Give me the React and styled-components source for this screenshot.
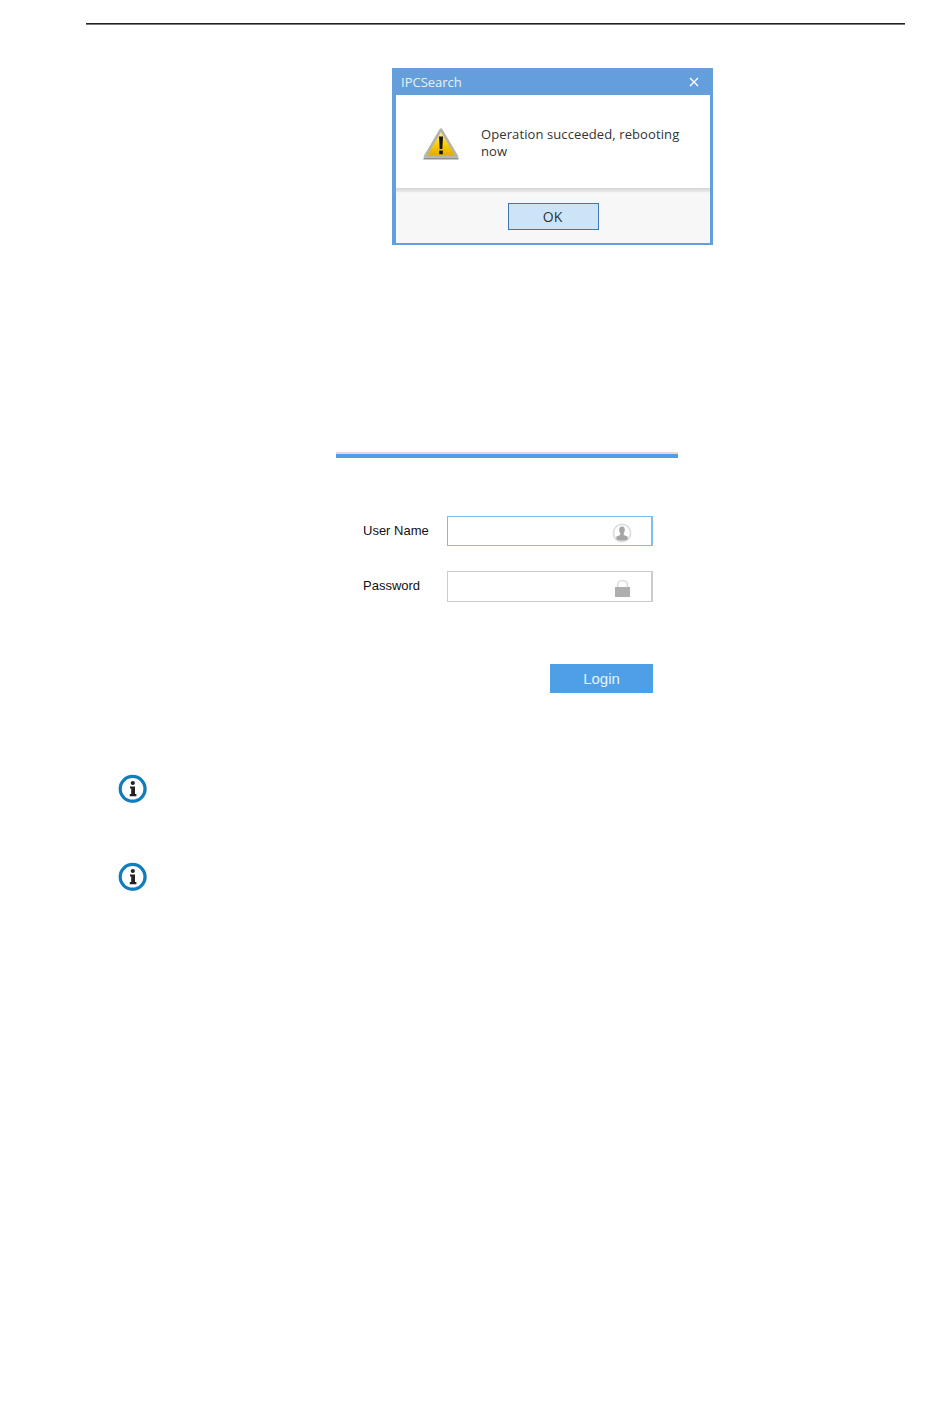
import React from 'react';
import styled, { createGlobalStyle } from 'styled-components';

const Global = createGlobalStyle`
  html, body {
    margin: 0;
    padding: 0;
    background: #fff;
  }
`

const Page = styled.div`
  width: 950px;
  height: 1408px;
  padding-top: 23px;
  box-sizing: border-box;
  overflow: hidden;
  font-family: "Liberation Sans", Arial, sans-serif;
`

const Rule = styled.div`
  width: 819px;
  height: 2px;
  margin-left: 86px;
  background: linear-gradient(#222 50%, #777 50%);
`

const Dialog = styled.section`
  width: 321px;
  height: 177px;
  margin: 43px 0 0 392px;
  box-sizing: border-box;
  display: flex;
  flex-direction: column;
  border: solid #649fdb;
  border-width: 0 3px 2px 4px;
  font-family: "Open Sans", sans-serif;
`

const TitleBar = styled.header`
  height: 27px;
  margin: 0 -3px 0 -4px;
  padding: 0 14px 0 9px;
  display: flex;
  align-items: center;
  justify-content: space-between;
  background: #649fdb;
  color: #e8f1fa;
  font-size: 13px;
`

const Message = styled.div`
  height: 93px;
  padding-left: 27px;
  display: flex;
  align-items: center;
  gap: 22px;
  box-sizing: border-box;
`

const WarningSvg = styled.svg`
  flex: none;
  margin-top: 4px;
`

const MessageText = styled.p`
  width: 205px;
  margin: 2px 0 0;
  color: #333;
  font-size: 13px;
  line-height: 17px;
  letter-spacing: 0.1px;
`

const Footer = styled.footer`
  flex: 1;
  display: flex;
  justify-content: center;
  padding: 15px 0 0 1px;
  background: linear-gradient(#d6d6d6, #e4e4e4 3px, #f7f7f7 5px);
`

const OkButton = styled.button`
  width: 91px;
  height: 27px;
  padding: 0 2px 0 0;
  border: 1px solid #3f78b0;
  background: #cde4f8;
  color: #333;
  font: 14px "Open Sans", sans-serif;
`

const LoginPanel = styled.section`
  width: 342px;
  margin: 207px 0 0 336px;
`

const PanelBar = styled.div`
  height: 6px;
  box-sizing: border-box;
  border-top: 2px solid #dcdcdc;
  background: #4e9fe6;
`

const Form = styled.form`
  margin-top: 58px;
  padding: 0 25px 0 27px;
  display: flex;
  flex-direction: column;
  gap: 25px;
`

const Row = styled.div`
  display: flex;
  align-items: center;
  justify-content: space-between;
`

const Label = styled.label`
  margin-bottom: 2px;
  color: #111;
  font-size: 13px;
`

const Field = styled.div`
  width: 206px;
  height: ${p => p.$tall ? 31 : 30}px;
  box-sizing: border-box;
  display: flex;
  align-items: center;
  justify-content: flex-end;
  padding-right: ${p => p.$tall ? 21 : 19}px;
  border: 1px solid ${p => p.$active ? '#7fbcf5' : '#cccccc'};
  border-right-width: 2px;
`

const LoginButton = styled.button`
  width: 103px;
  height: 29px;
  margin: 37px 0 0 auto;
  padding: 0;
  border: none;
  background: #4e9fe6;
  color: #e6f3ff;
  font: 15px "Liberation Sans", Arial, sans-serif;
`

const Notes = styled.div`
  margin: 81px 0 0 118px;
  display: flex;
  flex-direction: column;
  gap: 58px;
`

const UserSvg = styled.svg`
  margin-top: 3px;
`

const LockSvg = styled.svg`
  margin-top: 2px;
`

const WarningIcon = () => (
  <WarningSvg width="36" height="33" viewBox="0 0 36 33">
    <defs>
      <linearGradient id="warn" x1="0" y1="0" x2="0" y2="1">
        <stop offset="0" stopColor="#fff6b0" />
        <stop offset="0.55" stopColor="#f7d000" />
        <stop offset="1" stopColor="#e6a500" />
      </linearGradient>
    </defs>
    <path d="M18 2.5 L34 29.5 H2 Z" fill="url(#warn)" stroke="#b4b4aa" strokeWidth="2.6" strokeLinejoin="round" />
    <path d="M0.5 31.6 H35.5" stroke="#8f8f8f" strokeWidth="1.8" />
    <path d="M16 9.5 H20 L19.3 22 H16.7 Z" fill="#17120a" />
    <rect x="16.2" y="23.6" width="3.6" height="3.6" fill="#17120a" />
  </WarningSvg>
)

const UserIcon = () => (
  <UserSvg width="20" height="20" viewBox="0 0 20 20">
    <circle cx="10" cy="10" r="8.6" fill="#fff" stroke="#dedede" strokeWidth="1.8" />
    <path d="M10 3.5 C7.8 3.5 7 5.2 7.2 7.2 C7.3 8.6 7.8 9.7 8.2 10.3 V12 L4.4 13.6 V16.6 C7 18 13 18 15.6 16.6 V13.6 L11.8 12 V10.3 C12.2 9.7 12.7 8.6 12.8 7.2 C13 5.2 12.2 3.5 10 3.5 Z" fill="#a6a6a6" />
  </UserSvg>
)

const LockIcon = () => (
  <LockSvg width="15" height="18" viewBox="0 0 15 18">
    <path d="M2.6 9 V5.5 C2.6 0.3 12.4 0.3 12.4 5.5 V9" fill="none" stroke="#d8d8d8" strokeWidth="1.4" />
    <rect x="0" y="8" width="15" height="10" fill="#aeaeae" />
  </LockSvg>
)

const InfoIcon = () => (
  <svg width="30" height="30" viewBox="0 0 30 30">
    <circle cx="15" cy="15.2" r="14" fill="#d4dde3" />
    <circle cx="14.6" cy="14.8" r="12.4" fill="#fff" stroke="#0f7dbd" strokeWidth="3.2" />
    <circle cx="14.8" cy="9" r="2.1" fill="#222" />
    <path d="M12 12.4 H17 V20 H18.4 V22.2 H11.8 V20 H13.2 V14.4 H12 Z" fill="#222" />
  </svg>
)

export default function App() {
  return (
    <Page>
      <Global />
      <Rule />
      <Dialog>
        <TitleBar>
          <span>IPCSearch</span>
          <svg width="10" height="10" viewBox="0 0 10 10">
            <path d="M1 1 L9 9 M9 1 L1 9" stroke="#fff" strokeWidth="1.4" />
          </svg>
        </TitleBar>
        <Message>
          <WarningIcon />
          <MessageText>Operation succeeded, rebooting now</MessageText>
        </Message>
        <Footer>
          <OkButton type="button">OK</OkButton>
        </Footer>
      </Dialog>
      <LoginPanel>
        <PanelBar />
        <Form>
          <Row>
            <Label>User Name</Label>
            <Field $active><UserIcon /></Field>
          </Row>
          <Row>
            <Label>Password</Label>
            <Field $tall><LockIcon /></Field>
          </Row>
          <LoginButton type="button">Login</LoginButton>
        </Form>
      </LoginPanel>
      <Notes>
        <InfoIcon />
        <InfoIcon />
      </Notes>
    </Page>
  );
}
